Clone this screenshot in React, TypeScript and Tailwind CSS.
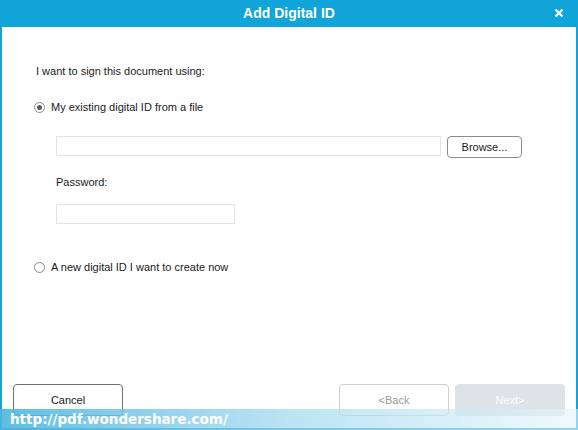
import React from 'react';

function Radio({ checked }: { checked?: boolean }) {
    return (
        <span className="w-[11px] h-[11px] rounded-full border border-[#8a8a8a] bg-white flex items-center justify-center shrink-0">
            {checked && <span className="w-[5px] h-[5px] rounded-full bg-[#5a5a5a]" />}
        </span>
    );
}

export default function App() {
    return (
        <div
            className="relative w-[578px] h-[430px] bg-[#10a4d8] flex flex-col overflow-hidden"
            style={{ fontFamily: '"Liberation Sans", Arial, sans-serif' }}
        >
            {/* Title bar */}
            <div className="h-[27px] flex items-center justify-center relative shrink-0">
                <span className="text-white font-bold text-[14px]">Add Digital ID</span>
                <span className="absolute right-[14px] top-[8px] text-white">
                    <svg width="10" height="10" viewBox="0 0 10 10">
                        <path d="M1.5 1.5 L8.5 8.5 M8.5 1.5 L1.5 8.5" stroke="white" strokeWidth="2.2" />
                    </svg>
                </span>
            </div>

            {/* Body */}
            <div className="flex-1 mx-[2px] mb-[2px] bg-white flex flex-col text-[11px] leading-[14px] text-[#1a1a1a]">
                <div className="pl-[34px] pt-[37px]">I want to sign this document using:</div>

                <label className="flex items-center gap-[6px] pl-[32px] mt-[22px]">
                    <Radio checked />
                    <span>My existing digital ID from a file</span>
                </label>

                <div className="flex items-start pl-[54px] mt-[22px]">
                    <div className="w-[385px] h-[20px] border border-[#e3e3e3]" />
                    <button className="ml-[6px] w-[75px] h-[22px] rounded-[4px] border border-[#8c8c8c] bg-white text-[11px] text-[#1a1a1a]">
                        Browse...
                    </button>
                </div>

                <div className="pl-[54px] mt-[17px]">Password:</div>

                <div className="pl-[54px] mt-[15px]">
                    <div className="w-[179px] h-[20px] border border-[#e3e3e3]" />
                </div>

                <label className="flex items-center gap-[6px] pl-[32px] mt-[36px]">
                    <Radio />
                    <span>A new digital ID I want to create now</span>
                </label>

                <div className="flex-1" />

                <div className="flex items-center px-[11px] pb-[12px]">
                    <button className="w-[110px] h-[32px] rounded-[4px] border border-[#707070] bg-white text-[11px] text-[#1a1a1a]">
                        Cancel
                    </button>
                    <div className="flex-1" />
                    <button className="w-[110px] h-[32px] rounded-[4px] border border-[#cfcfcf] bg-white text-[11px] text-[#9a9a9a]">
                        &lt;Back
                    </button>
                    <button className="ml-[6px] w-[110px] h-[32px] rounded-[4px] bg-[#dde3e7] text-[11px] text-white">
                        Next&gt;
                    </button>
                </div>
            </div>

            {/* Watermark */}
            <div className="absolute left-0 bottom-0 w-full h-[21px] bg-gradient-to-r from-[#4cb6e0]/90 via-[#9fd8ef]/70 to-[#e6f6fc]/60 flex items-center pl-[10px]">
                <span
                    className="text-white font-bold text-[13.5px] leading-none"
                    style={{ fontFamily: '"DejaVu Sans", Verdana, sans-serif' }}
                >
                    http://pdf.wondershare.com/
                </span>
            </div>
        </div>
    );
}
